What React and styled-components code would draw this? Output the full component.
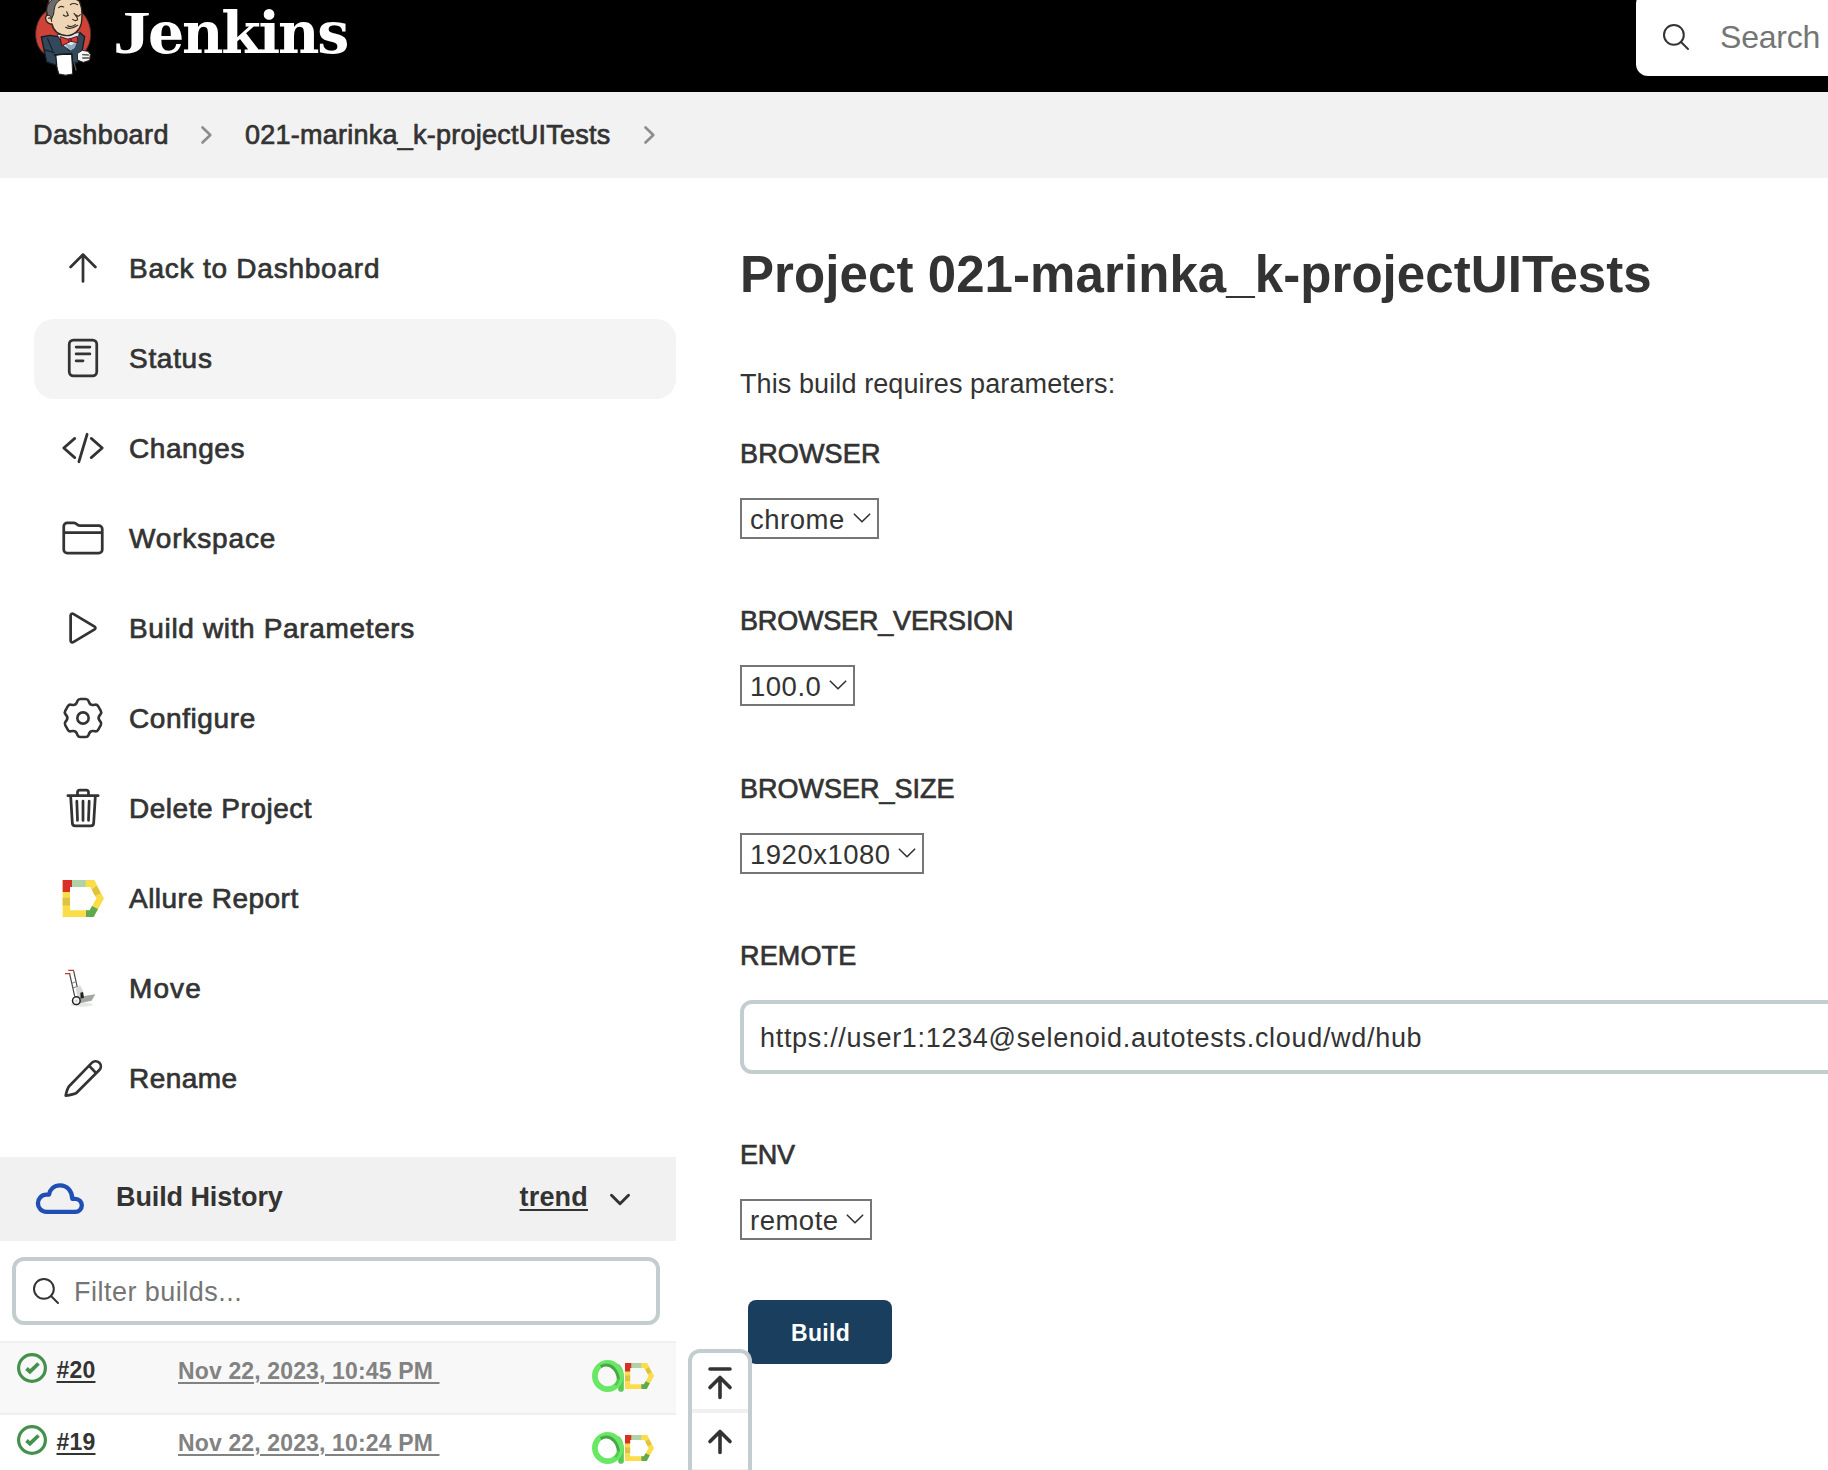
import React from "react";
import styled, { createGlobalStyle } from "styled-components";

const ink = "#333333";

const GlobalStyle = createGlobalStyle`
  *, *::before, *::after { box-sizing: border-box; }
  body {
    margin: 0;
    background: #ffffff;
    color: ${ink};
    font-family: "Liberation Sans", Arial, Helvetica, sans-serif;
    overflow: hidden;
  }
  svg { display: block; flex: none; overflow: visible; }
`;

const Page = styled.div`
  height: 1470px;
  display: flex;
  flex-direction: column;
  overflow: hidden;
`;

/* ---------- header ---------- */

const Header = styled.header`
  flex: none;
  height: 92px;
  padding-left: 33px;
  display: flex;
  align-items: flex-start;
  background: #000000;
  overflow: hidden;
`;

const Brand = styled.a`
  display: flex;
  align-items: flex-start;
  gap: 18px;
`;

const Wordmark = styled.span`
  display: flex;
  align-items: baseline;
  height: 92px;
  color: #ffffff;
  font: bold 57px/66px "DejaVu Serif", Georgia, serif;
  letter-spacing: -2.2px;
`;

const Initial = styled.span`
  display: inline-block;
  width: 35px;
  font-family: "Liberation Serif", Georgia, serif;
  font-size: 61px;
  letter-spacing: 0;
  transform: scaleX(1.24);
  transform-origin: 0 50%;
`;

const SearchBox = styled.label`
  flex: none;
  width: 220px;
  height: 84px;
  margin: -8px -28px 0 auto;
  padding: 5px 0 0 27px;
  display: flex;
  align-items: center;
  gap: 31px;
  border-radius: 12px;
  background: #ffffff;
  color: #757575;
  font-size: 32px;
  line-height: 40px;
  letter-spacing: -0.2px;
`;

const Breadcrumbs = styled.nav`
  flex: none;
  height: 86px;
  padding: 0 0 1px 33px;
  display: flex;
  align-items: center;
  background: #f2f2f2;
`;

const Crumb = styled.a`
  font-size: 27px;
  line-height: 32px;
  letter-spacing: ${(p) => p.$track}px;
  -webkit-text-stroke: 0.7px ${ink};
`;

const CrumbArrow = styled.svg`
  margin: 0 ${(p) => p.$after}px 0 ${(p) => p.$before}px;
`;

/* ---------- columns ---------- */

const Columns = styled.div`
  flex: 1;
  min-height: 0;
  display: flex;
`;

const Sidebar = styled.aside`
  flex: none;
  width: 676px;
  padding-top: 51px;
`;

const Tasks = styled.nav`
  display: flex;
  flex-direction: column;
  gap: 10px;
  padding-left: 34px;
`;

const Task = styled.a`
  height: 80px;
  padding: 0 0 2px 26.5px;
  display: flex;
  align-items: center;
  gap: 24.5px;
  border-radius: 20px;
  background: ${(p) => (p.$active ? "#f4f4f4" : "transparent")};
  font-size: 28px;
  line-height: 32px;
  letter-spacing: ${(p) => p.$track}px;
  -webkit-text-stroke: 0.7px ${ink};
`;

const TaskLabel = styled.span`
  padding-top: 2px;
`;

const History = styled.section`
  margin-top: 38px;
`;

const HistoryHead = styled.div`
  height: 84px;
  padding: 0 46px 0 36px;
  display: flex;
  align-items: center;
  background: #f1f1f1;
  font-size: 27px;
  font-weight: bold;
  line-height: 32px;
`;

const HistoryTitle = styled.span`
  margin: -5px auto 0 32px;
  letter-spacing: -0.1px;
`;

const TrendLink = styled.a`
  margin: -5px 22px 0 0;
  letter-spacing: 0.2px;
  text-decoration: underline 2px;
  text-underline-offset: 3px;
`;

const FilterBox = styled.label`
  width: 648px;
  height: 68px;
  margin: 16px 0 16px 12px;
  padding-left: 17px;
  display: flex;
  align-items: center;
  gap: 15px;
  border: 4px solid #c3cccf;
  border-radius: 12px;
  color: #757575;
  font-size: 27px;
  line-height: 32px;
  letter-spacing: 0.48px;
`;

const FilterText = styled.span`
  padding-top: 1px;
`;

const BuildRow = styled.div`
  height: 72px;
  padding: 10px 0 0 17px;
  display: grid;
  grid-template-columns: 39.5px 121.5px 414px 33px 31px;
  align-items: start;
  border-top: 2px solid #efefef;
  background: ${(p) => (p.$shaded ? "#f8f8f8" : "#ffffff")};
  font-size: 23px;
  font-weight: bold;
  line-height: 32px;
`;

const BuildLink = styled.a`
  justify-self: start;
  padding-top: 1px;
  letter-spacing: 0.2px;
  text-decoration: underline 2px;
  text-underline-offset: 3px;
`;

const BuildDate = styled.a`
  justify-self: start;
  padding-top: 2px;
  color: #828282;
  letter-spacing: 0.14px;
  white-space: pre;
  text-decoration: underline 2px;
  text-underline-offset: 3px;
`;

const Badge = styled.span`
  padding-top: ${(p) => p.$top}px;
`;

/* ---------- main form ---------- */

const Main = styled.main`
  flex: 1;
  min-width: 0;
  padding: 67px 0 0 64px;
  overflow: hidden;
`;

const Title = styled.h1`
  margin: 0 0 59px;
  font-size: 51px;
  font-weight: bold;
  line-height: 60px;
  letter-spacing: 0.08px;
  white-space: nowrap;
`;

const Intro = styled.p`
  margin: 0 0 30px;
  font-size: 27px;
  line-height: 40px;
  letter-spacing: 0.1px;
`;

const Field = styled.div`
  padding-bottom: ${(p) => p.$after}px;
`;

const FieldName = styled.div`
  margin-bottom: 24px;
  font-size: 27px;
  line-height: 40px;
  letter-spacing: ${(p) => p.$track || 0}px;
  -webkit-text-stroke: 0.7px ${ink};
`;

const Select = styled.button`
  width: ${(p) => p.$width}px;
  height: 41px;
  padding: 2px 6px 0 8px;
  display: flex;
  align-items: center;
  justify-content: space-between;
  border: 2px solid #767676;
  border-radius: 0;
  background: #ffffff;
  color: ${ink};
  font: 27.5px/32px "Liberation Sans", Arial, sans-serif;
  letter-spacing: 0.5px;
  svg { margin-top: -4px; }
`;

const TextInput = styled.div`
  width: 1200px;
  height: 74px;
  padding: 1px 0 0 16px;
  display: flex;
  align-items: center;
  border: 4px solid #c3cccf;
  border-radius: 12px;
  font-size: 27px;
  line-height: 32px;
  letter-spacing: 0.69px;
`;

const BuildButton = styled.button`
  width: 144px;
  height: 64px;
  margin-left: 8px;
  padding: 2px 0 0 1px;
  border: 0;
  border-radius: 8px;
  background: #1a3e5e;
  color: #ffffff;
  font: bold 23px/32px "Liberation Sans", Arial, sans-serif;
  letter-spacing: 0.3px;
`;

/* Scroll shortcuts float over the form. */
const ScrollWidget = styled.div`
  position: absolute;
  left: 688px;
  top: 1349px;
  width: 64px;
  height: 121px;
  border: 4px solid #c3cccf;
  border-bottom: 0;
  border-radius: 12px 12px 0 0;
  background: #ffffff;
  overflow: hidden;
`;

const ScrollButton = styled.div`
  height: 60px;
  display: flex;
  justify-content: center;
  padding-top: ${(p) => p.$top}px;
  border-bottom: 4px solid #f0f0f0;
`;

/* ---------- drawings ---------- */

const Line = ({ size = 44, weight = 32, children }) => (
  <svg width={size} height={size} viewBox="0 0 512 512" fill="none" stroke={ink} strokeWidth={weight} strokeLinecap="round" strokeLinejoin="round">
    {children}
  </svg>
);

const UpIcon = () => <Line><path d="M112 244l144-144 144 144M256 120v292" /></Line>;

const StatusIcon = () => (
  <Line>
    <rect x="96" y="48" width="320" height="416" rx="48" />
    <path d="M176 128h160M176 208h160M176 288h80" />
  </Line>
);

const CodeIcon = () => <Line><path d="M160 368L32 256l128-112M352 368l128-112-128-112M304 96l-96 320" /></Line>;

const FolderIcon = () => (
  <Line>
    <path d="M440 432H72a40 40 0 01-40-40V120a40 40 0 0140-40h75.89a40 40 0 0122.19 6.72l27.84 18.56a40 40 0 0022.19 6.72H440a40 40 0 0140 40v240a40 40 0 01-40 40zM32 192h448" />
  </Line>
);

const PlayIcon = () => (
  <Line>
    <path d="M112 111v290c0 17.44 17 28.52 31 20.16l247.9-148.37c12.12-7.25 12.12-26.33 0-33.58L143 90.84c-14-8.36-31 2.72-31 20.16z" />
  </Line>
);

/* Six-tooth gear outline with softened corners. */
const gearPath = (() => {
  const pts = [];
  for (let i = 0; i < 6; i++) {
    const a = (i * Math.PI) / 3;
    [[-14, -57], [14, -57], [22, -38.1]].forEach(([x, y]) => {
      pts.push([x * Math.cos(a) - y * Math.sin(a), x * Math.sin(a) + y * Math.cos(a)]);
    });
  }
  const toward = (p, q, d) => {
    const l = Math.hypot(q[0] - p[0], q[1] - p[1]);
    return [p[0] + ((q[0] - p[0]) * d) / l, p[1] + ((q[1] - p[1]) * d) / l];
  };
  const f = (p) => p.map((n) => n.toFixed(2)).join(" ");
  return (
    pts
      .map((p, i) => {
        const r = i % 3 === 2 ? 9 : 6;
        const before = toward(p, pts[(i + 17) % 18], r);
        const after = toward(p, pts[(i + 1) % 18], r);
        return `${i ? "L" : "M"}${f(before)}Q${f(p)} ${f(after)}`;
      })
      .join("") + "Z"
  );
})();

const GearIcon = () => (
  <svg width="44" height="44" viewBox="-66 -66 132 132" fill="none" stroke={ink} strokeWidth="7.8" strokeLinejoin="round">
    <path d={gearPath} />
    <circle r="17" />
  </svg>
);

const TrashIcon = () => (
  <Line>
    <path d="M112 112l20 320c.95 18.49 14.4 32 32 32h184c17.67 0 30.87-13.51 32-32l20-320M80 112h352M192 112V72a23.93 23.93 0 0124-24h80a23.93 23.93 0 0124 24v40M256 176v224M184 176l8 224M328 176l-8 224" />
  </Line>
);

const PencilIcon = () => (
  <svg width="44" height="44" viewBox="0 0 132 132" fill="none" stroke={ink} strokeWidth="8" strokeLinejoin="round">
    <path d="M14 119C17 105 19 96 25 90L93 20C98 14.500 108 14 115 20C121 26.500 121 36 115 42L46 111C39 115 28 117 14 119Z" />
    <path d="M84 29L105 51" />
  </svg>
);

const AllureIcon = ({ width, height, ...rest }) => (
  <svg width={width} height={height} viewBox="0 0 124 110" preserveAspectRatio="none" {...rest}>
    <path fill="#fbdd4a" fillRule="evenodd" d="M0 0H95L124 55L93 110H0ZM22 21V90H81L101 55L83 21Z" />
    <path fill="#d63027" d="M0 0H28V21H22V36H0Z" />
    <path fill="#b1d1a7" d="M28 0H69V21H28Z" />
    <path fill="#dec343" d="M102 18L114 40L97 47L87 28ZM0 53H22V76H0Z" />
    <path fill="#5faa51" d="M70 90H81L88 77L106 86L93 110H70Z" />
  </svg>
);

const MoveIcon = () => (
  <svg width="44" height="44" viewBox="0 0 132 132" fill="none">
    <ellipse cx="62" cy="116" rx="34" ry="6" fill="#e6e6e6" />
    <path d="M26 24L41 90M38 15L55 92" stroke="#4a4a4a" strokeWidth="3.500" />
    <path d="M33 52L42 48M36 66L46 62" stroke="#777777" strokeWidth="3" />
    <path d="M12 23H28M22 13H39" stroke="#bd3a31" strokeWidth="4" />
    <path d="M44 66L57 58L66 74L68 92L50 96Z" fill="#d7d9d6" />
    <path d="M46 94L103 85L92 104L50 113Z" fill="#a3a7a1" />
    <path d="M58 80L66 78L69 95L59 98Z" fill="#222222" />
    <circle cx="46" cy="104" r="11.500" fill="#f3f3f3" stroke="#222222" strokeWidth="4.500" />
    <circle cx="46" cy="104" r="3" fill="#cccccc" />
  </svg>
);

const CloudIcon = () => (
  <svg width="48" height="31" viewBox="108 131 144 93" fill="none" stroke="#1f4eb4" strokeWidth="13" strokeLinejoin="round">
    <path d="M139 214.500A25 25.500 0 0 1 139 163H147C150 146 163 135 180 135C202 135 216 152 217 175.500H226A19.500 19.500 0 0 1 226 214.500Z" />
  </svg>
);

const SearchIcon = ({ weight = 2 }) => (
  <svg width="26" height="26" viewBox="0 0 26 26" fill="none" stroke={ink} strokeWidth={weight} strokeLinecap="round">
    <circle cx="10.900" cy="10.900" r="9.900" />
    <path d="M18 18L25 25" />
  </svg>
);

const CheckIcon = () => (
  <svg width="30" height="30" viewBox="0 0 30 30" fill="none" stroke="#44914d">
    <circle cx="15" cy="15" r="13.400" strokeWidth="3.200" />
    <path d="M9.500 15.500L13 18.700L21.500 10.500" strokeWidth="3.800" />
  </svg>
);

const QaIcon = () => (
  <svg width="32" height="32" viewBox="0 0 96 96" fill="none">
    <path d="M78 22Q86 32 87 48V87" stroke="#58c956" strokeWidth="17" strokeLinecap="round" />
    <ellipse cx="47" cy="48" rx="38.500" ry="39.500" stroke="#69e866" strokeWidth="17" />
    <path d="M26 20Q48 8 66 26Q79 40 79 60" stroke="#4aa648" strokeWidth="9" />
    <path d="M79 56Q78 68 70 76" stroke="#55c453" strokeWidth="7" />
  </svg>
);

const TopIcon = () => (
  <svg width="24" height="34" viewBox="0 0 24 34" fill="none" stroke={ink} strokeWidth="3.600" strokeLinecap="round" strokeLinejoin="round">
    <path d="M2 3H22M2 21.500L12 11.500L22 21.500M12 12.500V31.500" />
  </svg>
);

const PageUpIcon = () => (
  <svg width="24" height="26" viewBox="0 0 24 26" fill="none" stroke={ink} strokeWidth="3.600" strokeLinecap="round" strokeLinejoin="round">
    <path d="M2 13.500L12 3.500L22 13.500M12 4.500V24.500" />
  </svg>
);

const DownIcon = ({ width, height, weight }) => (
  <svg width={width} height={height} viewBox="0 0 20 11" fill="none" stroke={ink} strokeWidth={weight} strokeLinecap="round" strokeLinejoin="round">
    <path d="M1.500 1.300L10 9.700L18.500 1.300" />
  </svg>
);

const Mascot = () => (
  <svg width="62" height="78" viewBox="99 0 186 234" strokeLinejoin="round" strokeLinecap="round">
    <path d="M190 16C236 16 272 52 272 103C272 128 262 148 248 162L140 166C120 154 107 132 107 103C107 52 144 16 190 16Z" fill="#cf4237" stroke="#4d2a27" strokeWidth="3" />
    <path d="M163 165L215 160L218 222Q196 229 177 222Z" fill="#ffffff" stroke="#2b2b2b" strokeWidth="3" />
    <path d="M124 111L150 106L174 110L208 152L240 98L254 110L247 150L238 160L234 188L218 190L216 162L167 164L170 196L140 186Z" fill="#33495b" stroke="#141c24" strokeWidth="4" />
    <path d="M143 116L158 152M136 150L163 158" stroke="#172430" strokeWidth="4" fill="none" />
    <path d="M172 104L238 98L226 142L212 152L192 138Z" fill="#dbe8f1" stroke="#1d2730" strokeWidth="2" />
    <path d="M191 128L214 136L232 124L222 146L210 150Z" fill="#8eaabe" />
    <path d="M149 -4C165 -14 222 -10 238 4C246 20 247 48 244 70C239 91 222 107 200 107C176 105 160 92 156 72C138 72 132 53 141 45C140 30 142 12 149 -4Z" fill="#eed5b5" stroke="#30241d" strokeWidth="4" />
    <path d="M143 46C135 26 144 2 164 -4L190 -4C170 2 163 14 161 42L155 56Q152 44 143 46Z" fill="#6c6a6a" stroke="#252323" strokeWidth="3" />
    <path d="M145 55Q154 50 155 64M176 23Q182 16 191 21M211 14Q220 7 233 14M190 45Q197 52 205 46L200 35M228 45Q234 52 241 44M222 40Q236 57 232 60Q225 64 218 58M197 82Q212 91 233 76M203 77Q215 83 226 74" fill="none" stroke="#3b2d24" strokeWidth="3.500" />
    <path d="M181 110L205 118L232 109L234 128L212 124L186 137Z" fill="#dc3d34" stroke="#4f1716" strokeWidth="3" />
    <circle cx="209" cy="120" r="5" fill="#b42b25" stroke="#4f1716" strokeWidth="2" />
    <path d="M233 160L247 151L264 154L271 163L269 181L250 187L234 181Z" fill="#f6f6f6" stroke="#2b2b2b" strokeWidth="3" />
    <path d="M248 164L265 165M248 174L266 174M223 190L228 210" fill="none" stroke="#4d4d4d" strokeWidth="4" />
    <path d="M163 165L215 160" stroke="#1a1a1a" strokeWidth="4" />
  </svg>
);

/* ---------- content ---------- */

const tasks = [
  { label: "Back to Dashboard", track: 0.77, Icon: UpIcon },
  { label: "Status", track: 0.7, Icon: StatusIcon, active: true },
  { label: "Changes", track: 0.55, Icon: CodeIcon },
  { label: "Workspace", track: 0.85, Icon: FolderIcon },
  { label: "Build with Parameters", track: 0.65, Icon: PlayIcon },
  { label: "Configure", track: 0.6, Icon: GearIcon },
  { label: "Delete Project", track: 0.52, Icon: TrashIcon },
  { label: "Allure Report", track: 0.48, Icon: () => <AllureIcon width={44} height={37} viewBox="-5 0 132 110" /> },
  { label: "Move", track: 1.1, Icon: MoveIcon },
  { label: "Rename", track: 0.45, Icon: PencilIcon },
];

const builds = [
  { id: "#20", date: "Nov 22, 2023, 10:45 PM", shaded: true },
  { id: "#19", date: "Nov 22, 2023, 10:24 PM" },
];

const Dropdown = ({ name, value, width, after, track }) => (
  <Field $after={after}>
    <FieldName $track={track}>{name}</FieldName>
    <Select $width={width}>
      {value}
      <DownIcon width={18} height={10} weight={1.8} />
    </Select>
  </Field>
);

export default function App() {
  return (
    <Page>
      <GlobalStyle />
      <Header>
        <Brand>
          <Mascot />
          <Wordmark><Initial>J</Initial>enkins</Wordmark>
        </Brand>
        <SearchBox>
          <SearchIcon />
          Search
        </SearchBox>
      </Header>
      <Breadcrumbs>
        <Crumb $track={0.42}>Dashboard</Crumb>
        <CrumbArrow $before={32} $after={33} width="11" height="18" viewBox="0 0 11 18" fill="none" stroke="#8c8c8c" strokeWidth="2.600" strokeLinecap="round" strokeLinejoin="round"><path d="M1.500 1.500L9.300 9L1.500 16.500" /></CrumbArrow>
        <Crumb $track={0.25}>021-marinka_k-projectUITests</Crumb>
        <CrumbArrow $before={33} $after={0} width="11" height="18" viewBox="0 0 11 18" fill="none" stroke="#8c8c8c" strokeWidth="2.600" strokeLinecap="round" strokeLinejoin="round"><path d="M1.500 1.500L9.300 9L1.500 16.500" /></CrumbArrow>
      </Breadcrumbs>
      <Columns>
        <Sidebar>
          <Tasks>
            {tasks.map(({ label, track, Icon, active }) => (
              <Task key={label} $track={track} $active={active}>
                <Icon />
                <TaskLabel>{label}</TaskLabel>
              </Task>
            ))}
          </Tasks>
          <History>
            <HistoryHead>
              <CloudIcon />
              <HistoryTitle>Build History</HistoryTitle>
              <TrendLink>trend</TrendLink>
              <DownIcon width={20} height={11} weight={3} />
            </HistoryHead>
            <FilterBox>
              <SearchIcon />
              <FilterText>Filter builds...</FilterText>
            </FilterBox>
            {builds.map(({ id, date, shaded }) => (
              <BuildRow key={id} $shaded={shaded}>
                <Badge $top={0}><CheckIcon /></Badge>
                <BuildLink>{id}</BuildLink>
                <BuildDate>{date + "\u00a0"}</BuildDate>
                <Badge $top={7}><QaIcon /></Badge>
                <Badge $top={10}><AllureIcon width={29} height={26} /></Badge>
              </BuildRow>
            ))}
          </History>
        </Sidebar>
        <Main>
          <Title>Project 021-marinka_k-projectUITests</Title>
          <Intro>This build requires parameters:</Intro>
          <Dropdown name="BROWSER" value="chrome" width={139} after={62} track={0.15} />
          <Dropdown name="BROWSER_VERSION" value="100.0" width={115} after={63} track={-0.18} />
          <Dropdown name="BROWSER_SIZE" value="1920x1080" width={184} after={62} />
          <Field $after={61}>
            <FieldName $track={0.15}>REMOTE</FieldName>
            <TextInput>https://user1:1234@selenoid.autotests.cloud/wd/hub</TextInput>
          </Field>
          <Dropdown name="ENV" value="remote" width={132} after={60} track={-0.3} />
          <BuildButton>Build</BuildButton>
        </Main>
      </Columns>
      <ScrollWidget>
        <ScrollButton $top={13}><TopIcon /></ScrollButton>
        <ScrollButton $top={15}><PageUpIcon /></ScrollButton>
      </ScrollWidget>
    </Page>
  );
}
